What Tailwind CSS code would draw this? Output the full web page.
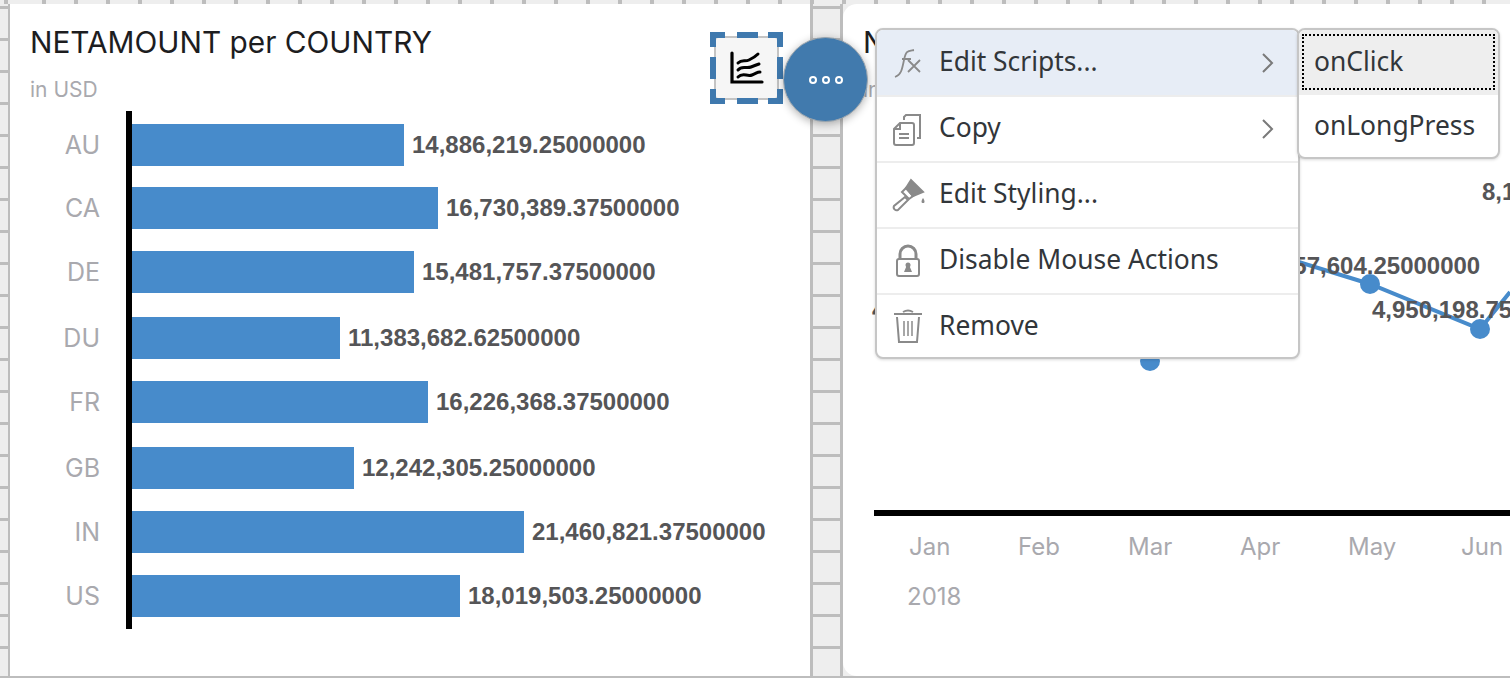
<!DOCTYPE html>
<html><head><meta charset="utf-8">
<script src="https://cdn.jsdelivr.net/npm/@tailwindcss/browser@4"></script>
</head>
<body class="w-[1510px] h-[678px] overflow-hidden bg-[#eeeeee] font-['Inter','Liberation_Sans',sans-serif]">
<div class="relative w-[1510px] h-[678px] overflow-hidden flex flex-col">
  <!-- top ruler -->
  <div class="h-[4px] shrink-0 bg-[repeating-linear-gradient(90deg,#eeeeee_0,#eeeeee_28px,#bdbdbd_28px,#bdbdbd_32px)] bg-[position:14px_0]"></div>
  <div class="flex flex-1 min-h-0">
    <!-- left gutter -->
    <div class="w-[10px] shrink-0 border-r-2 border-[#bdbdbd] bg-[repeating-linear-gradient(180deg,#eeeeee_0,#eeeeee_29px,#bdbdbd_29px,#bdbdbd_32px)] bg-[position:0_5px]"></div>
    <!-- left card -->
    <section class="relative w-[800px] shrink-0 bg-white pl-[20px]">
      <h2 class="pt-[21px] text-[29.8px] leading-[34px] text-[#1d1d1f] whitespace-nowrap">NETAMOUNT per COUNTRY</h2>
      <p class="mt-[19px] text-[21px] leading-[24px] text-[#a9a9ae]">in USD</p>
      <div class="absolute left-[116px] top-[107px] w-[6px] h-[518px] bg-black"></div>
      <div class="mt-[22px] flex flex-col text-[24px] font-bold text-[#555557] font-['Liberation_Sans',sans-serif]">
        <div class="flex items-center h-[42px]"><span class="w-[70px] pt-[2px] text-right font-normal text-[25px] text-[#a9a9ae] font-['Inter',sans-serif]">AU</span><div class="ml-[32px] w-[272px] h-full bg-[#478bcb]"></div><span class="ml-[8px] whitespace-nowrap">14,886,219.25000000</span></div>
        <div class="flex items-center h-[42px] mt-[21px]"><span class="w-[70px] pt-[2px] text-right font-normal text-[25px] text-[#a9a9ae] font-['Inter',sans-serif]">CA</span><div class="ml-[32px] w-[306px] h-full bg-[#478bcb]"></div><span class="ml-[8px] whitespace-nowrap">16,730,389.37500000</span></div>
        <div class="flex items-center h-[42px] mt-[22px]"><span class="w-[70px] pt-[2px] text-right font-normal text-[25px] text-[#a9a9ae] font-['Inter',sans-serif]">DE</span><div class="ml-[32px] w-[282px] h-full bg-[#478bcb]"></div><span class="ml-[8px] whitespace-nowrap">15,481,757.37500000</span></div>
        <div class="flex items-center h-[42px] mt-[24px]"><span class="w-[70px] pt-[2px] text-right font-normal text-[25px] text-[#a9a9ae] font-['Inter',sans-serif]">DU</span><div class="ml-[32px] w-[208px] h-full bg-[#478bcb]"></div><span class="ml-[8px] whitespace-nowrap">11,383,682.62500000</span></div>
        <div class="flex items-center h-[42px] mt-[22px]"><span class="w-[70px] pt-[2px] text-right font-normal text-[25px] text-[#a9a9ae] font-['Inter',sans-serif]">FR</span><div class="ml-[32px] w-[296px] h-full bg-[#478bcb]"></div><span class="ml-[8px] whitespace-nowrap">16,226,368.37500000</span></div>
        <div class="flex items-center h-[42px] mt-[24px]"><span class="w-[70px] pt-[2px] text-right font-normal text-[25px] text-[#a9a9ae] font-['Inter',sans-serif]">GB</span><div class="ml-[32px] w-[222px] h-full bg-[#478bcb]"></div><span class="ml-[8px] whitespace-nowrap">12,242,305.25000000</span></div>
        <div class="flex items-center h-[42px] mt-[22px]"><span class="w-[70px] pt-[2px] text-right font-normal text-[25px] text-[#a9a9ae] font-['Inter',sans-serif]">IN</span><div class="ml-[32px] w-[392px] h-full bg-[#478bcb]"></div><span class="ml-[8px] whitespace-nowrap">21,460,821.37500000</span></div>
        <div class="flex items-center h-[42px] mt-[22px]"><span class="w-[70px] pt-[2px] text-right font-normal text-[25px] text-[#a9a9ae] font-['Inter',sans-serif]">US</span><div class="ml-[32px] w-[328px] h-full bg-[#478bcb]"></div><span class="ml-[8px] whitespace-nowrap">18,019,503.25000000</span></div>
      </div>
    </section>
    <!-- middle gutter -->
    <div class="w-[33px] shrink-0 border-x-3 border-[#bdbdbd] bg-[repeating-linear-gradient(180deg,#eeeeee_0,#eeeeee_29px,#bdbdbd_29px,#bdbdbd_32px)] bg-[position:0_5px]"></div>
    <!-- right card -->
    <section class="relative flex-1 bg-white rounded-tl-[14px] rounded-bl-[14px] pl-[20px] overflow-hidden">
      <h2 class="pt-[21px] text-[29.8px] leading-[34px] text-[#1d1d1f] whitespace-nowrap">NETAMOUNT per MONTH</h2>
      <p class="mt-[19px] text-[21px] leading-[24px] text-[#a9a9ae]">in USD</p>
      <svg class="absolute left-0 top-0" width="667" height="672" viewBox="843 4 667 672" fill="none">
        <path d="M1150 361L1260 250L1370 284L1480 329L1510 292" stroke="#478bcb" stroke-width="4"/>
        <circle cx="1150" cy="361" r="10" fill="#478bcb"/>
        <circle cx="1370" cy="284" r="10" fill="#478bcb"/>
        <circle cx="1480" cy="329" r="10" fill="#478bcb"/>
      </svg>
      <span class="absolute left-[29px] top-[292px] text-[24px] leading-[28px] font-bold text-[#555557] font-['Liberation_Sans',sans-serif] whitespace-nowrap">4,100,000.00000000</span>
      <span class="absolute left-[417px] top-[248px] text-[24px] leading-[28px] font-bold text-[#555557] font-['Liberation_Sans',sans-serif] whitespace-nowrap">6,757,604.25000000</span>
      <span class="absolute left-[529px] top-[292px] text-[24px] leading-[28px] font-bold text-[#555557] font-['Liberation_Sans',sans-serif] whitespace-nowrap">4,950,198.75000000</span>
      <span class="absolute left-[639px] top-[174px] text-[24px] leading-[28px] font-bold text-[#555557] font-['Liberation_Sans',sans-serif] whitespace-nowrap">8,100,000.00000000</span>
      <div class="absolute left-[31px] right-0 top-[506px] h-[6px] bg-black"></div>
      <div class="absolute left-[31px] right-0 top-[528px] h-[30px] text-[24px] leading-[30px] text-[#a9a9ae]">
        <span class="absolute left-[35px]">Jan</span><span class="absolute left-[144px]">Feb</span><span class="absolute left-[254px]">Mar</span><span class="absolute left-[366px]">Apr</span><span class="absolute left-[474px]">May</span><span class="absolute left-[587px]">Jun</span>
      </div>
      <span class="absolute left-[64px] top-[578px] text-[24px] leading-[30px] text-[#a9a9ae]">2018</span>
    </section>
  </div>
  <div class="h-[2px] shrink-0 bg-[#bdbdbd]"></div>

  <!-- selected chart-type button -->
  <div class="absolute left-[710px] top-[32px] w-[73px] h-[72px]">
    <svg class="absolute inset-0" width="73" height="72" viewBox="0 0 73 72" fill="none">
      <rect x="5" y="5" width="63" height="62" rx="3" fill="#f6f6f6" stroke="#c4c4c4" stroke-width="2"/>
      <path d="M3 15V3H15M27 3H48M58 3H70V15M70 25V47M70 57V69H58M48 69H27M15 69H3V57M3 47V25" stroke="#3f79ae" stroke-width="6"/>
    </svg>
    <svg class="absolute left-[20px] top-[19px]" width="34" height="34" viewBox="0 0 34 34" fill="none" stroke="#000" stroke-width="3" stroke-linecap="round"><path d="M2 2V31H32" stroke-width="3.2"/><path d="M8 12C12 8 15 11 19 9S25 6 28 3"/><path d="M8 19C12 14 16 18 21 16S26 14 29 13"/><path d="M8 26C13 21 17 26 22 24S27 21 30 21"/></svg>
  </div>
  <!-- floating action -->
  <div class="absolute left-[783px] top-[37px] w-[85px] h-[85px] rounded-full bg-[#417aad] border border-[#9aa5ae] shadow-[0_2px_8px_rgba(0,0,0,0.3)] flex items-center justify-center gap-[5px]">
    <i class="block w-[8px] h-[8px] rounded-full border-[2px] border-white"></i><i class="block w-[8px] h-[8px] rounded-full border-[2px] border-white"></i><i class="block w-[8px] h-[8px] rounded-full border-[2px] border-white"></i>
  </div>
  <!-- context menu -->
  <div class="absolute left-[875px] top-[28px] w-[425px] bg-white rounded-[8px] border-2 border-[#c6c6c6] overflow-hidden text-[26.4px] text-[#32363a] font-['Noto_Sans',sans-serif] shadow-[0_1px_3px_rgba(0,0,0,0.15)]">
    <div class="flex items-center h-[65px] bg-[#e7edf6]">
      <span class="w-[62px] shrink-0 flex justify-center"><svg width="30" height="30" viewBox="0 0 30 30" fill="none" stroke="#8a8a8a" stroke-width="1.8"><path d="M2 29C8 27 9 22 11 12S15 3 21 2M9 11H18"/><path d="M15 12L27 24M27 12L15 24"/></svg></span>
      <span class="flex-1 pb-[2px]">Edit Scripts...</span>
      <svg class="mr-[24px]" width="13" height="22" viewBox="0 0 13 22" fill="none" stroke="#7a7a7a" stroke-width="2"><path d="M2 2L11 11L2 20"/></svg>
    </div>
    <div class="flex items-center h-[66px] border-t-2 border-[#ededed]">
      <span class="w-[62px] shrink-0 flex justify-center"><svg width="30" height="34" viewBox="0 0 30 34" fill="none" stroke="#8a8a8a" stroke-width="2"><path d="M7 11H19A2 2 0 0 1 21 13V31A2 2 0 0 1 19 33H3A2 2 0 0 1 1 31V17Z"/><path d="M1 17H7V11"/><path d="M11 8V5L13 3H27V26H24"/><path d="M6 22H16M6 26H16"/></svg></span>
      <span class="flex-1 pb-[2px]">Copy</span>
      <svg class="mr-[24px]" width="13" height="22" viewBox="0 0 13 22" fill="none" stroke="#7a7a7a" stroke-width="2"><path d="M2 2L11 11L2 20"/></svg>
    </div>
    <div class="flex items-center h-[66px] border-t-2 border-[#ededed]">
      <span class="w-[62px] shrink-0 flex justify-center"><svg width="34" height="34" viewBox="0 0 34 34" fill="none" stroke="#8a8a8a" stroke-width="2"><path d="M14 19L3 28A3 3 0 0 0 7 32L17 22Z"/><path d="M11 14L18 21L22 18L15 10Z"/><path d="M15 10L20 2L32 14L22 18Z" fill="#8a8a8a"/><path d="M32 20C30 23 30 25 32 25C34 25 34 23 32 20Z" fill="#8a8a8a" stroke="none"/></svg></span>
      <span class="flex-1 pb-[2px]">Edit Styling...</span>
    </div>
    <div class="flex items-center h-[66px] border-t-2 border-[#ededed]">
      <span class="w-[62px] shrink-0 flex justify-center"><svg width="26" height="34" viewBox="0 0 26 34" fill="none" stroke="#8a8a8a" stroke-width="2"><path d="M5 15V10A8 8 0 0 1 21 10V15" stroke-width="3"/><rect x="2" y="15" width="22" height="17" rx="2"/><circle cx="13" cy="21" r="2.5" fill="#8a8a8a" stroke="none"/><path d="M9 28H17L14.5 22H11.5Z" fill="#8a8a8a" stroke="none"/></svg></span>
      <span class="flex-1 pb-[2px]">Disable Mouse Actions</span>
    </div>
    <div class="flex items-center h-[64px] border-t-2 border-[#ededed]">
      <span class="w-[62px] shrink-0 flex justify-center"><svg width="30" height="34" viewBox="0 0 30 34" fill="none" stroke="#8a8a8a" stroke-width="2"><path d="M1 5H29"/><path d="M10 3Q15 0 20 3"/><path d="M4 8L6 33H24L26 8"/><path d="M11 12V27M15 12V27M19 12V27" stroke-width="1.5"/></svg></span>
      <span class="flex-1">Remove</span>
    </div>
  </div>
  <!-- submenu -->
  <div class="absolute left-[1297px] top-[28px] w-[203px] h-[131px] bg-white rounded-[8px] border-2 border-[#c6c6c6] text-[26.4px] text-[#32363a] font-['Noto_Sans',sans-serif] overflow-hidden shadow-[0_1px_3px_rgba(0,0,0,0.15)]">
    <div class="h-[65px] bg-[#eeeeee] px-[3px] pt-[4px]"><div class="h-[56px] border-2 border-dotted border-black flex items-center pl-[10px]">onClick</div></div>
    <div class="h-[62px] flex items-center pl-[15px]">onLongPress</div>
  </div>
</div>
</body></html>
